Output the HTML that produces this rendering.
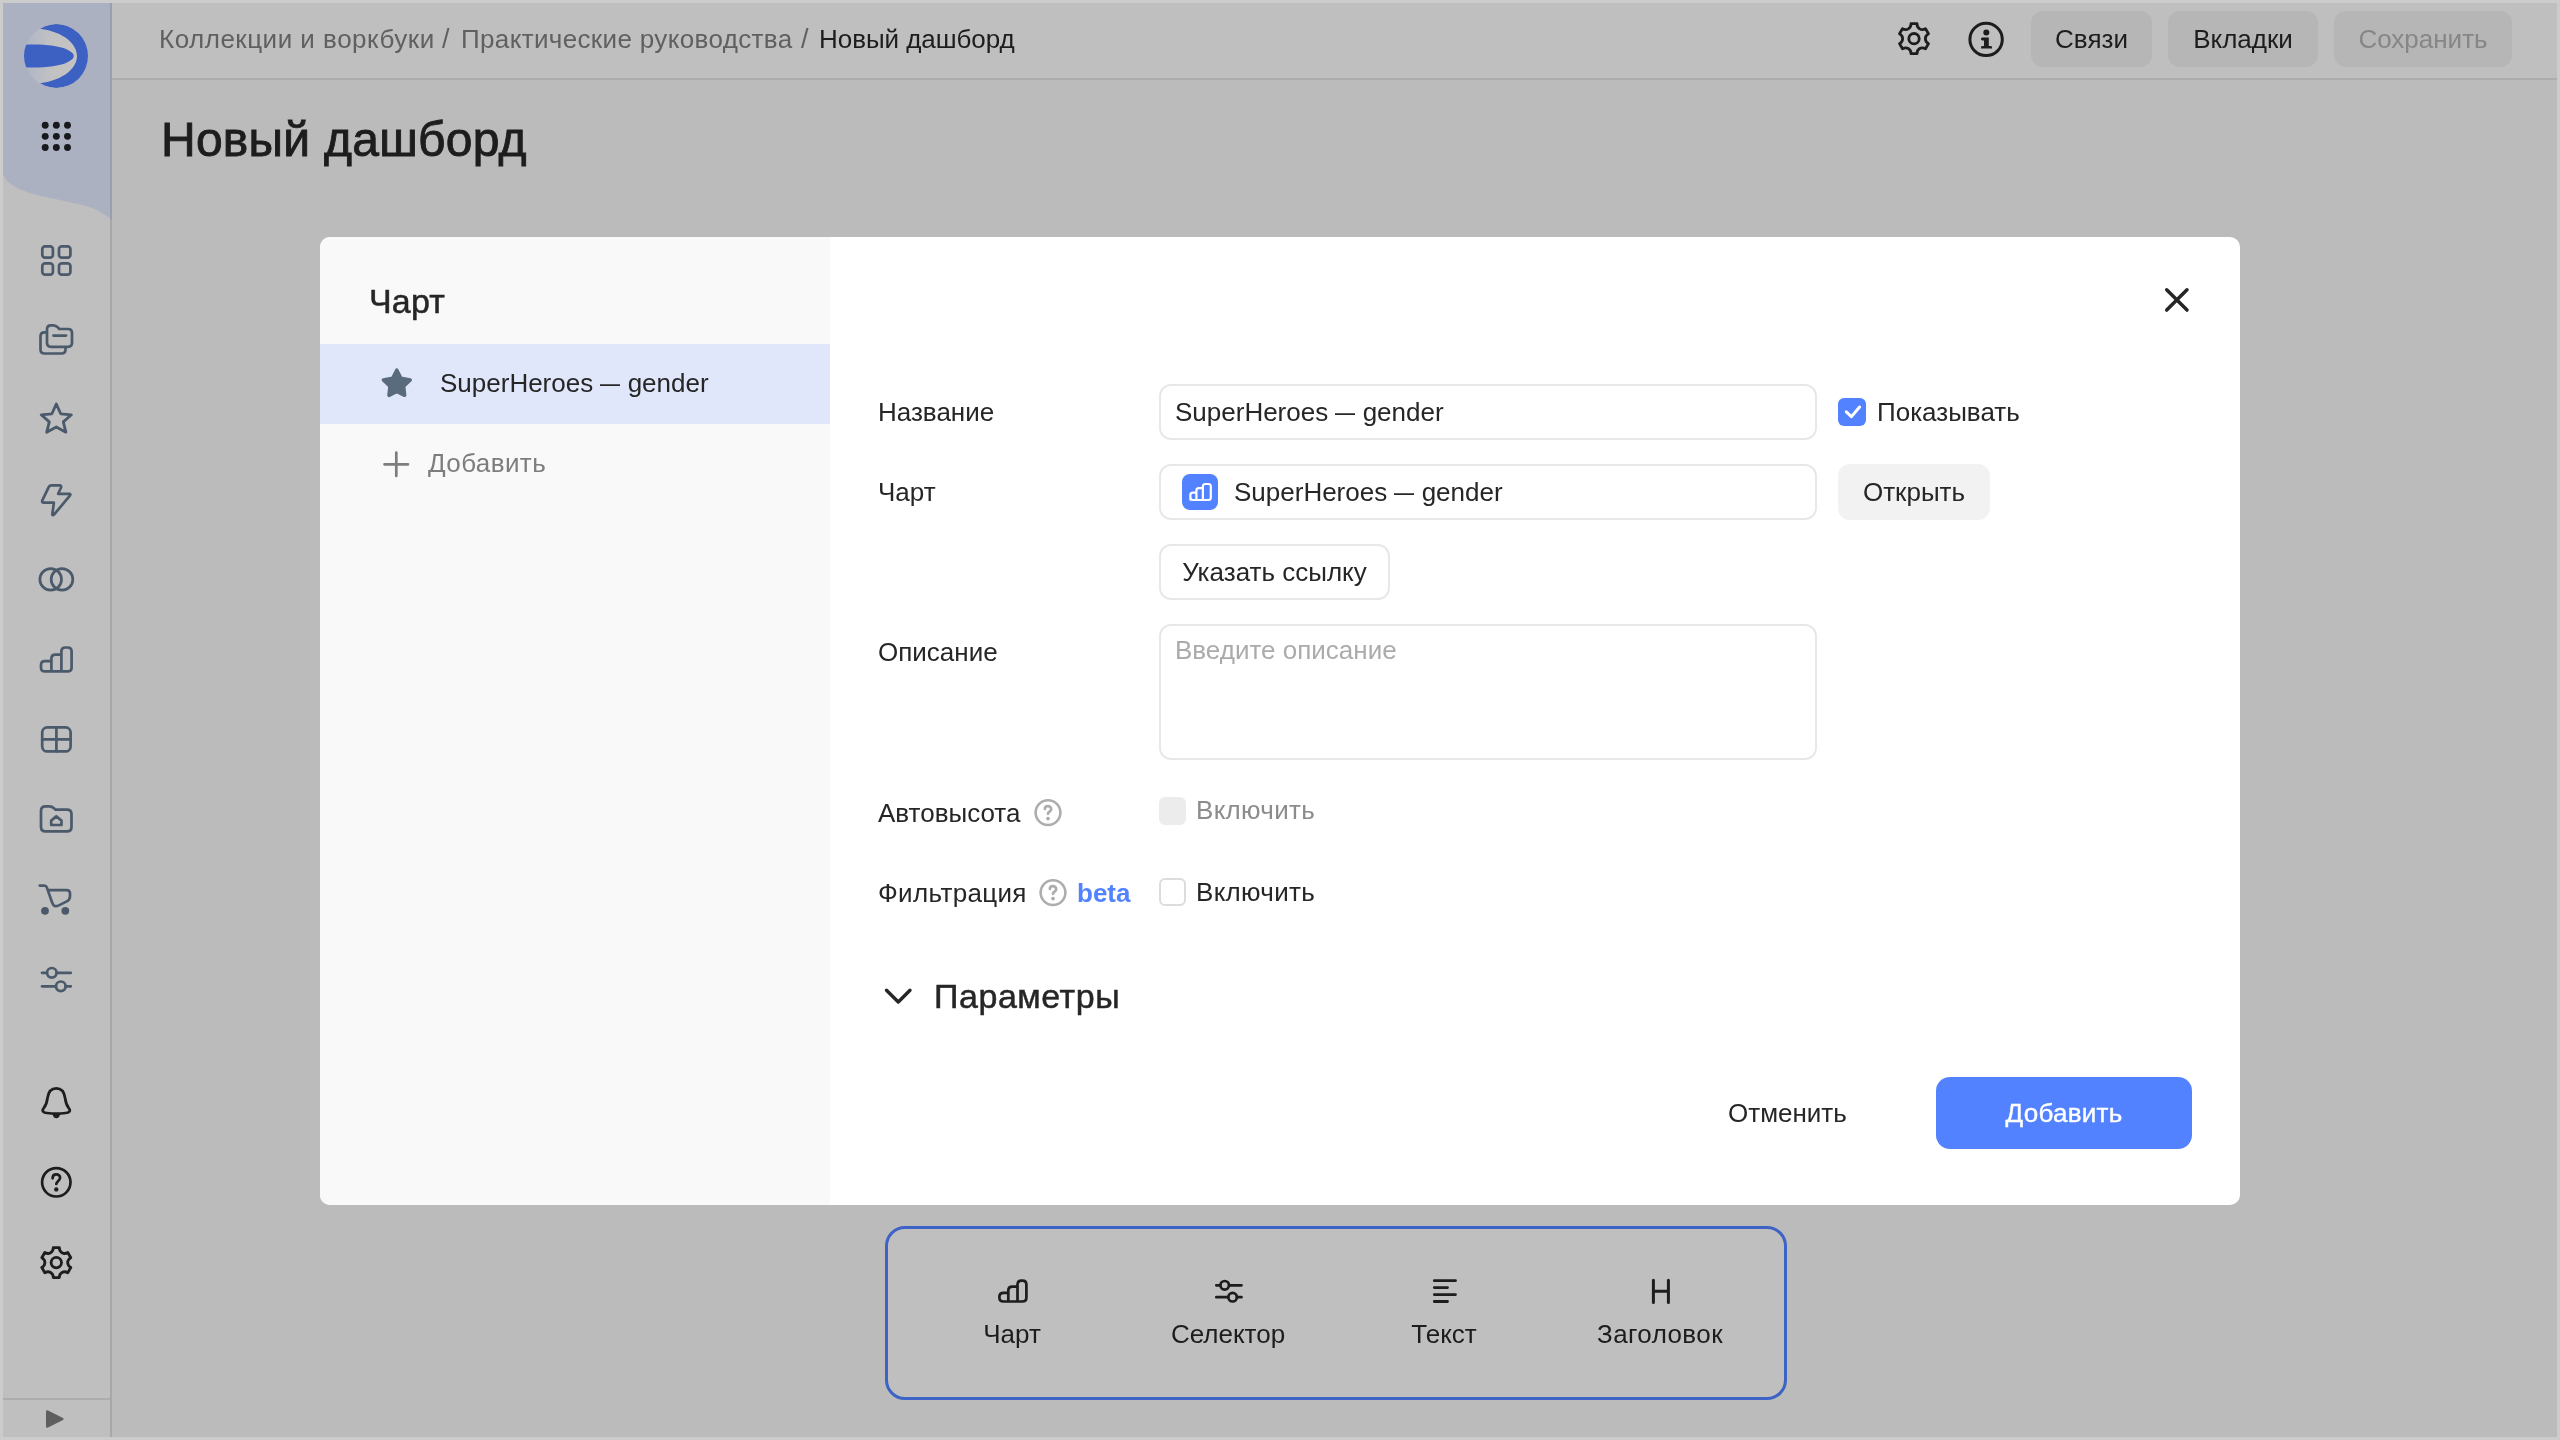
<!DOCTYPE html>
<html><head><meta charset="utf-8">
<style>
*{box-sizing:border-box;margin:0;padding:0}
html,body{width:2560px;height:1440px;overflow:hidden;background:#cccccc;font-family:"Liberation Sans",sans-serif}
.a{position:absolute}
.d{display:inline-block;transform:scaleX(0.77);margin:0 -3px}
.t{will-change:transform;position:absolute;white-space:nowrap;font-size:26px;line-height:32px;color:#262626}
#frame{position:absolute;left:3px;top:3px;width:2554px;height:1434px;background:#bbbbbb;overflow:hidden}
</style></head><body>
<div id="frame"></div>
<!-- sidebar -->
<div class="a" style="left:3px;top:3px;width:107px;height:1434px;background:#bfbfbf"></div>
<!-- header -->
<div class="a" style="left:112px;top:3px;width:2445px;height:77px;background:#bfbfbf;border-bottom:2px solid #adadad"></div>
<div class="a" style="left:110px;top:3px;width:2px;height:1434px;background:rgba(0,0,0,0.1);z-index:5"></div>
<div class="a" style="left:3px;top:1398px;width:107px;height:2px;background:#adadad"></div>

<div class="a" style="left:885px;top:1226px;width:902px;height:174px;border:3px solid #3d63c6;border-radius:20px;background:#bfbfbf"></div>
<svg class="a" style="left:0;top:0" width="2560" height="1440" viewBox="0 0 2560 1440">
  <defs>
    <linearGradient id="lg" x1="0" y1="0" x2="1" y2="0">
      <stop offset="0" stop-color="#aeb5c6"/>
      <stop offset="0.45" stop-color="#c2c2c2"/>
      <stop offset="1" stop-color="#c4c4c4"/>
    </linearGradient>
    <clipPath id="lc"><circle cx="56" cy="56" r="32"/></clipPath>
  </defs>
  <!-- decoration -->
  <path d="M3,3 H112 V220 C101,211 92,207 78,204 L48,197.5 C22,192 8,186 3,174 Z" fill="#abb1c0"/>
  <!-- logo -->
  <circle cx="56" cy="56" r="32" fill="url(#lg)"/>
  <g clip-path="url(#lc)" fill="#3d61c2">
    <path d="M40,28.75 A32,32 0 1 1 40,83.25 C64,80 77,68 77,56 C77,44 64,32 40,28.75 Z"/>
    <path d="M20,45 C40,43.5 58,45.5 66,49 C71,51.5 73.75,53.5 73.75,56 C73.75,58.5 71,60.5 66,63 C58,66.5 40,68.5 20,67 Z"/>
  </g>
  <!-- 9 dots -->
  <g fill="#18191c"><circle cx="45.2" cy="125.2" r="3.45"/><circle cx="56.35" cy="125.2" r="3.45"/><circle cx="67.5" cy="125.2" r="3.45"/><circle cx="45.2" cy="136.35" r="3.45"/><circle cx="56.35" cy="136.35" r="3.45"/><circle cx="67.5" cy="136.35" r="3.45"/><circle cx="45.2" cy="147.5" r="3.45"/><circle cx="56.35" cy="147.5" r="3.45"/><circle cx="67.5" cy="147.5" r="3.45"/></g>
  <!-- sidebar icons -->
  <g fill="none" stroke="#4a5a6b" stroke-width="2.7" stroke-linecap="round" stroke-linejoin="round">
    <rect x="42.3" y="246.3" width="10.6" height="11.4" rx="2.8"/>
    <rect x="59" y="246.3" width="11.4" height="11.4" rx="2.8"/>
    <rect x="42.3" y="263.3" width="10.6" height="11.4" rx="2.8"/>
    <rect x="59" y="263.3" width="11.4" height="11.4" rx="2.8"/>
    <!-- collections -->
    <path d="M51,325.3 H53.5 C55.5,325.3 56.5,326 57.8,327.4 L59.3,329 H68 Q72,329 72,333 V342.8 Q72,346.8 68,346.8 H51 Q47,346.8 47,342.8 V329.3 Q47,325.3 51,325.3 Z"/>
    <path d="M46,332.3 H44.5 Q40.5,332.3 40.5,336.3 V349.5 Q40.5,353.5 44.5,353.5 H61.5 Q65.5,353.5 65.5,349.5 V347.5"/>
    <path d="M53.5,335.6 H66"/>
    <!-- star -->
    <path d="M56.3,404 L60.7,413.8 L71.4,414.8 L63.3,421.9 L65.9,432.2 L56.3,426.9 L46.7,432.2 L49.3,421.9 L41.2,414.8 L51.9,413.8 Z" stroke-width="2.8"/>
    <!-- lightning -->
    <path d="M48.7,487.2 Q49.3,485.4 51.2,485.4 H59.5 Q61.7,485.4 61,487.5 L58.2,493.8 H68.8 Q71.5,493.8 69.7,495.8 L54.4,514.2 Q52,516.6 52.4,513.6 L53.9,502.6 H44 Q41.5,502.6 42.3,500.4 Z"/>
    <!-- rings -->
    <circle cx="50.7" cy="579.4" r="10.8"/>
    <circle cx="62" cy="579.4" r="10.8"/>
    <!-- chart -->
    <path d="M41,667.4 V665 Q41,661.2 45,661.2 H51.4 V658.5 Q51.4,654.6 55.4,654.6 H61.4 V651.5 Q61.4,647.5 65.4,647.5 H67.6 Q71.6,647.5 71.6,651.5 V667.4 Q71.6,671.4 67.6,671.4 H45 Q41,671.4 41,667.4 Z M51.4,661.2 V671.4 M61.4,654.6 V671.4"/>
    <!-- table -->
    <rect x="42.2" y="727.4" width="28.4" height="24" rx="5"/>
    <path d="M56.4,727.4 V751.4 M42.2,739.3 H70.6"/>
    <!-- folder home -->
    <path d="M45.5,806.3 H49.5 C51.5,806.3 52.8,807 54,808.3 L55.5,809.7 H67 Q71.5,809.7 71.5,814.2 V827 Q71.5,831.4 67,831.4 H45.5 Q41,831.4 41,827 V810.8 Q41,806.3 45.5,806.3 Z"/>
    <path d="M56.3,816.3 L61.5,820.6 V825 H51.2 V820.6 Z"/>
    <!-- cart -->
    <path d="M39.8,885.6 H44.4 Q46.2,885.6 46.8,887.4 L52.3,903 Q54,907.6 58.3,905.6 L66.8,901.4 Q70,899.8 70,896.3 V893.5 Q70,890.1 66.6,890.1 H47.6"/>
    <!-- sliders -->
    <path d="M42,972.8 H47 M56.6,972.8 H70.8 M42,986.3 H56 M65.6,986.3 H70.8"/>
    <circle cx="51.8" cy="972.8" r="4.8"/>
    <circle cx="60.8" cy="986.3" r="4.8"/>
  </g>
  <g fill="#4a5a6b"><circle cx="45" cy="910.8" r="3.9"/><circle cx="65.3" cy="910.8" r="3.9"/></g>
  <!-- bell / help / gear -->
  <g fill="none" stroke="#1d1d1d" stroke-width="2.7" stroke-linecap="round" stroke-linejoin="round">
    <path d="M56.3,1088.4 C50,1088.4 48.2,1093 47.5,1098 C46.8,1104 45.5,1106 43.5,1108.5 C41.5,1111 43.5,1112.6 47,1113 C51,1113.6 61.5,1113.6 65.5,1113 C69,1112.6 71,1111 69,1108.5 C67,1106 65.8,1104 65.1,1098 C64.4,1093 62.6,1088.4 56.3,1088.4 Z"/>
    <circle cx="56.3" cy="1182.3" r="14.2"/>
    <path d="M52.6,1178.3 C52.6,1175.6 54.2,1174.3 56.3,1174.3 C58.5,1174.3 60.1,1175.8 60.1,1177.8 C60.1,1180.5 56.3,1181.3 56.3,1184"/>
    <path d="M53.30,1247.60 L59.30,1247.60 C59.30,1252.40 63.63,1254.90 67.79,1252.50 L70.79,1257.70 C66.63,1260.10 66.63,1265.10 70.79,1267.50 L67.79,1272.70 C63.63,1270.30 59.30,1272.80 59.30,1277.60 L53.30,1277.60 C53.30,1272.80 48.97,1270.30 44.81,1272.70 L41.81,1267.50 C45.97,1265.10 45.97,1260.10 41.81,1257.70 L44.81,1252.50 C48.97,1254.90 53.30,1252.40 53.30,1247.60 Z" stroke-width="2.8"/>
    <circle cx="56.3" cy="1262.6" r="5.2" stroke-width="2.8"/>
    <!-- header gear -->
    <path d="M1911.00,23.70 L1917.00,23.70 C1917.00,28.50 1921.33,31.00 1925.49,28.60 L1928.49,33.80 C1924.33,36.20 1924.33,41.20 1928.49,43.60 L1925.49,48.80 C1921.33,46.40 1917.00,48.90 1917.00,53.70 L1911.00,53.70 C1911.00,48.90 1906.67,46.40 1902.51,48.80 L1899.51,43.60 C1903.67,41.20 1903.67,36.20 1899.51,33.80 L1902.51,28.60 C1906.67,31.00 1911.00,28.50 1911.00,23.70 Z" stroke-width="2.8"/>
    <circle cx="1914" cy="38.7" r="5.2" stroke-width="2.8"/>
    <circle cx="1986.1" cy="39.4" r="16.2" stroke-width="3"/>
  </g>
  <g fill="#1d1d1d">
    <path d="M52.3,1114 H60.3 L59,1117 Q56.3,1119.5 53.6,1117 Z"/>
    <circle cx="56.3" cy="1189.4" r="2.2"/>
    <circle cx="1986.3" cy="32.6" r="3"/>
    <path d="M1982.3,37.5 H1988.8 V46 H1990.5 Q1992,46 1992,47.3 V48.6 H1981 V47.3 Q1981,46 1982.5,46 H1984 V40.4 H1982.3 Q1981,40.4 1981,39 Q1981,37.5 1982.3,37.5 Z"/>
  </g>
  <!-- toolbar icons -->
  <g fill="none" stroke="#1d1d1d" stroke-width="2.7" stroke-linecap="round" stroke-linejoin="round">
    <path d="M999.4,1297.5 V1296.8 Q999.4,1292.8 1003.4,1292.8 H1008.3 V1290.7 Q1008.3,1286.7 1012.3,1286.7 H1017.5 V1284.6 Q1017.5,1280.6 1021.5,1280.6 H1022.4 Q1026.4,1280.6 1026.4,1284.6 V1297.5 Q1026.4,1301.5 1022.4,1301.5 H1003.4 Q999.4,1301.5 999.4,1297.5 Z M1008.3,1292.8 V1301.5 M1017.5,1286.7 V1301.5"/>
    <path d="M1216.3,1285.3 H1220.4 M1229,1285.3 H1241.5 M1216.3,1297.2 H1228.3 M1236.9,1297.2 H1241.5"/>
    <circle cx="1224.7" cy="1285.3" r="4.3"/>
    <circle cx="1232.6" cy="1297.2" r="4.3"/>
    <path d="M1434.3,1280.7 H1455.5 M1434.3,1287.6 H1447.5 M1434.3,1294.6 H1455.5 M1434.3,1301.5 H1447.5" stroke-width="2.8"/>
    <path d="M1653.4,1280.3 V1302.4 M1668.4,1280.3 V1302.4 M1653.4,1291.25 H1668.4" stroke-width="3"/>
  </g>
  <!-- triangle -->
  <path d="M46,1411.5 Q46,1409.5 48,1410.5 L63,1418 Q64.5,1419 63,1420 L48,1427.5 Q46,1428.5 46,1426.5 Z" fill="#5e5e5e"/>
</svg>

<!-- breadcrumbs -->
<div class="t" style="left:158.5px;top:23px;color:#606060;letter-spacing:0.5px">Коллекции и воркбуки</div>
<div class="t" style="left:442px;top:23px;color:#606060;font-size:27px">/</div>
<div class="t" style="left:461px;top:23px;color:#606060;letter-spacing:0.35px">Практические руководства</div>
<div class="t" style="left:801px;top:23px;color:#606060;font-size:27px">/</div>
<div class="t" style="left:818.5px;top:23px;color:#1d1d1d;letter-spacing:-0.05px">Новый дашборд</div>
<!-- header buttons -->
<div class="a" style="left:2031px;top:11px;width:121px;height:56px;border-radius:12px;background:#b6b6b6"></div>
<div class="a" style="left:2168px;top:11px;width:150px;height:56px;border-radius:12px;background:#b6b6b6"></div>
<div class="a" style="left:2334px;top:11px;width:178px;height:56px;border-radius:12px;background:#b6b6b6"></div>
<div class="t" style="left:2031px;width:121px;text-align:center;top:23px;color:#1d1d1d">Связи</div>
<div class="t" style="left:2168px;width:150px;text-align:center;top:23px;color:#1d1d1d">Вкладки</div>
<div class="t" style="left:2334px;width:178px;text-align:center;top:23px;color:#868686">Сохранить</div>
<!-- title -->
<div class="t" style="left:161px;top:112px;font-size:48px;line-height:56px;color:#1d1d1d;-webkit-text-stroke:0.9px #1d1d1d;letter-spacing:0.25px">Новый дашборд</div>

<!-- bottom toolbar -->
<div class="t" style="left:912px;width:200px;text-align:center;top:1318px;color:#1d1d1d">Чарт</div>
<div class="t" style="left:1128px;width:200px;text-align:center;top:1318px;color:#1d1d1d">Селектор</div>
<div class="t" style="left:1344px;width:200px;text-align:center;top:1318px;color:#1d1d1d">Текст</div>
<div class="t" style="left:1560px;width:200px;text-align:center;top:1318px;color:#1d1d1d;letter-spacing:0.4px">Заголовок</div>

<!-- modal -->
<div class="a" style="left:320px;top:237px;width:1920px;height:968px;border-radius:10px;background:#fff;overflow:hidden">
  <div class="a" style="left:0;top:0;width:510px;height:968px;background:#f9f9f9"></div>
  <div class="a" style="left:0;top:107px;width:510px;height:80px;background:#e1e7fa"></div>
</div>
<div class="t" style="left:369px;top:281px;font-size:34px;line-height:40px;-webkit-text-stroke:0.5px #262626;letter-spacing:0.2px">Чарт</div>
<div class="t" style="left:440px;top:367px">SuperHeroes <span class="d">—</span> gender</div>
<div class="t" style="left:428px;top:447px;color:#7d7d7d;letter-spacing:0.4px">Добавить</div>

<div class="t" style="left:878px;top:396px">Название</div>
<div class="t" style="left:878px;top:476px">Чарт</div>
<div class="t" style="left:878px;top:636px">Описание</div>
<div class="t" style="left:878px;top:797px">Автовысота</div>
<div class="t" style="left:878px;top:877px;letter-spacing:0.35px">Фильтрация</div>
<div class="t" style="left:1077px;top:877px;color:#5282ff;font-weight:bold">beta</div>

<div class="a" style="left:1159px;top:384px;width:658px;height:56px;border:2px solid #e8e8e8;border-radius:12px"></div>
<div class="t" style="left:1175px;top:396px">SuperHeroes <span class="d">—</span> gender</div>
<div class="a" style="left:1838px;top:398px;width:28px;height:28px;border-radius:6px;background:#5282ff"></div>
<div class="t" style="left:1877px;top:396px">Показывать</div>

<div class="a" style="left:1159px;top:464px;width:658px;height:56px;border:2px solid #e8e8e8;border-radius:12px"></div>
<div class="a" style="left:1182px;top:474px;width:36px;height:36px;border-radius:8px;background:#5282ff"></div>
<div class="t" style="left:1234px;top:476px">SuperHeroes <span class="d">—</span> gender</div>
<div class="a" style="left:1838px;top:464px;width:152px;height:56px;border-radius:12px;background:#f2f2f2"></div>
<div class="t" style="left:1838px;width:152px;text-align:center;top:476px">Открыть</div>

<div class="a" style="left:1159px;top:544px;width:231px;height:56px;border:2px solid #e8e8e8;border-radius:12px"></div>
<div class="t" style="left:1159px;width:231px;text-align:center;top:556px">Указать ссылку</div>

<div class="a" style="left:1159px;top:624px;width:658px;height:136px;border:2px solid #e8e8e8;border-radius:12px"></div>
<div class="t" style="left:1175px;top:634px;color:#ababab">Введите описание</div>

<div class="a" style="left:1159px;top:797px;width:27px;height:28px;border-radius:6px;background:#ececec"></div>
<div class="t" style="left:1196px;top:794px;color:#8c8c8c;letter-spacing:0.3px">Включить</div>
<div class="a" style="left:1159px;top:878px;width:27px;height:28px;border-radius:6px;border:2px solid #dcdcdc"></div>
<div class="t" style="left:1196px;top:876px;letter-spacing:0.3px">Включить</div>

<div class="t" style="left:934px;top:976px;font-size:34px;line-height:40px;-webkit-text-stroke:0.5px #262626;letter-spacing:0.55px">Параметры</div>

<div class="t" style="left:1728px;top:1097px">Отменить</div>
<div class="a" style="left:1936px;top:1077px;width:256px;height:72px;border-radius:14px;background:#5282ff"></div>
<div class="t" style="left:1936px;width:256px;text-align:center;top:1097px;color:#fff;-webkit-text-stroke:0.4px #fff;letter-spacing:0.25px">Добавить</div>

<svg class="a" style="left:0;top:0" width="2560" height="1440" viewBox="0 0 2560 1440">
  <g fill="none" stroke-linecap="round" stroke-linejoin="round">
    <!-- close -->
    <path d="M2166.7,289.8 L2187,310.1 M2187,289.8 L2166.7,310.1" stroke="#262626" stroke-width="3.5"/>
    <!-- checkmark -->
    <path d="M1846.3,411.8 L1851.4,416.6 L1859.6,407" stroke="#fff" stroke-width="3"/>
    <!-- chart icon bars -->
    <path d="M1190.4,499.6 V495 Q1190.4,492.6 1192.8,492.6 H1196.4 V490.6 Q1196.4,488.2 1198.8,488.2 H1202.9 V486.4 Q1202.9,484 1205.3,484 H1208.4 Q1210.8,484 1210.8,486.4 V497.6 Q1210.8,500 1208.4,500 H1192.8 Q1190.4,500 1190.4,497.6 Z M1196.4,492.6 V500 M1202.9,488.2 V500" stroke="#fff" stroke-width="2.2"/>
    <!-- plus -->
    <path d="M396.3,452.5 V476 M384.5,464.3 H408" stroke="#7d7d7d" stroke-width="2.7"/>
    <!-- help icons -->
    <circle cx="1048" cy="812.6" r="12.4" stroke="#adadad" stroke-width="2.6"/>
    <circle cx="1053" cy="892.6" r="12.4" stroke="#adadad" stroke-width="2.6"/>
    <path d="M1044.9,809 C1044.9,807.2 1046.3,806.2 1048,806.2 C1049.8,806.2 1051.2,807.5 1051.2,809.2 C1051.2,811.4 1048,811.8 1048,813.8" stroke="#adadad" stroke-width="2.7"/>
    <path d="M1049.9,889 C1049.9,887.2 1051.3,886.2 1053,886.2 C1054.8,886.2 1056.2,887.5 1056.2,889.2 C1056.2,891.4 1053,891.8 1053,893.8" stroke="#adadad" stroke-width="2.7"/>
    <!-- chevron -->
    <path d="M886.5,990.3 L898.3,1002 L910,990.3" stroke="#262626" stroke-width="3.4"/>
  </g>
  <g fill="#adadad"><circle cx="1048" cy="818.6" r="1.9"/><circle cx="1053" cy="898.6" r="1.9"/></g>
  <g fill="#596b7d">
    <path d="M396.8,370.2 L400.9,378.3 L410.2,380 L403.6,386.2 L404.6,395.3 L396.8,391.4 L389,395.3 L390,386.2 L383.4,380 L392.7,378.3 Z" stroke="#596b7d" stroke-width="3.6" stroke-linejoin="round"/>
  </g>
</svg>

</body></html>
